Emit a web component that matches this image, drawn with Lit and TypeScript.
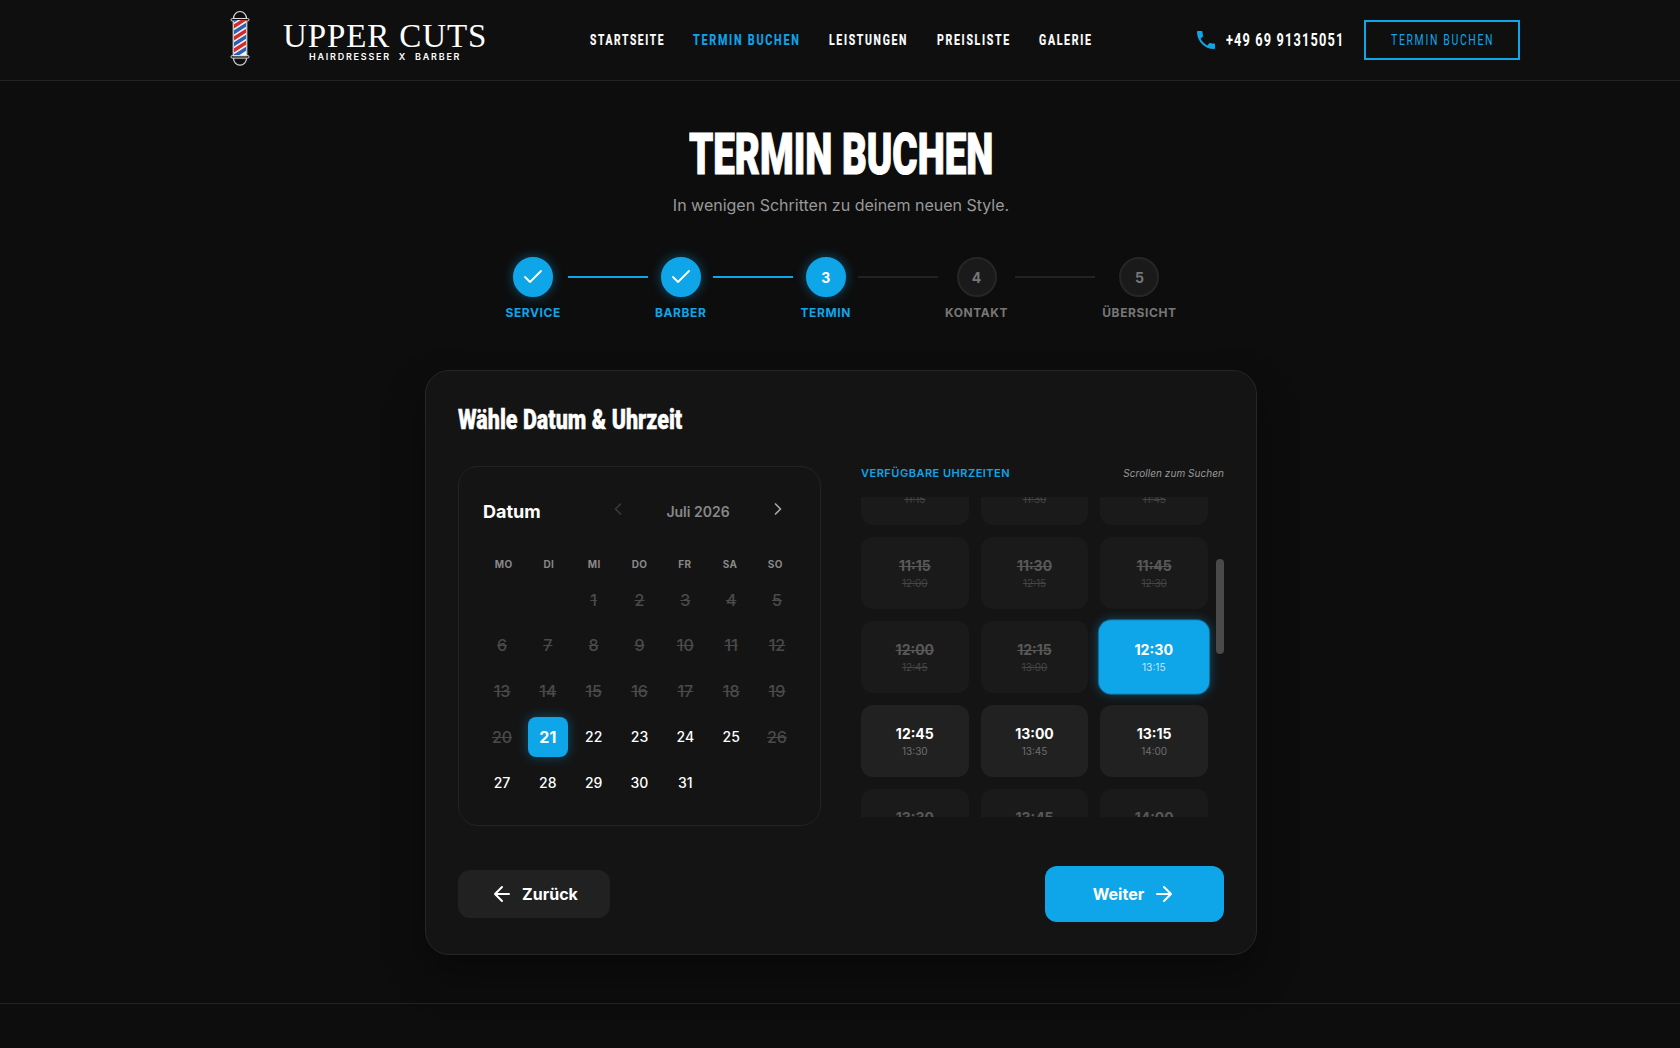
import { LitElement, html, css, svg } from "lit";
import { customElement } from "lit/decorators.js";

const pole = html`<svg class="pole" viewBox="0 0 20 56" width="20" height="56" aria-hidden="true">
  <defs><clipPath id="pc"><rect x="4" y="10" width="12" height="36"/></clipPath></defs>
  <path d="M3.5 8.5a6.5 7 0 0 1 13 0" fill="none" stroke="#ddd" stroke-width="1.2"/>
  <rect x="1" y="8.5" width="18" height="2.6" rx="1.3" fill="none" stroke="#ddd" stroke-width="1"/>
  <rect x="3" y="11" width="14" height="35" fill="#eee" stroke="#999" stroke-width="1"/>
  <g clip-path="url(#pc)">
    <rect x="4" y="10" width="12" height="36" fill="#f2f2f2"/>
    ${[-6, 6, 18, 30].map((y) => svg`<path d="M3 ${y + 9}L17 ${y}v4.2L3 ${y + 13.2}z" fill="#d42a2e"/>`)}
    ${[0, 12, 24, 36].map((y) => svg`<path d="M3 ${y + 9}L17 ${y}v4.2L3 ${y + 13.2}z" fill="#2b5fb0"/>`)}
  </g>
  <rect x="1" y="45.5" width="18" height="2.6" rx="1.3" fill="none" stroke="#ddd" stroke-width="1"/>
  <path d="M3.5 48.2a6.5 7 0 0 0 13 0" fill="none" stroke="#ddd" stroke-width="1.2"/>
</svg>`;

const ic = (d: string, size = 20, cls = "") =>
  html`<svg class=${cls} width=${size} height=${size} viewBox="0 0 24 24" fill="none" stroke="currentColor" stroke-width="2" stroke-linecap="round" stroke-linejoin="round" aria-hidden="true"><path d=${d}/></svg>`;

/* No condensed display face is installed: text is squeezed horizontally to its measured width. */
const fit = (text: string, w: number) =>
  html`<span class="fit" style="width:${w}px"><span class="fit-in" data-w=${w}>${text}</span></span>`;

const pad = (n: number) => String(n).padStart(2, "0");
const fmt = (m: number) => `${pad(Math.floor(m / 60))}:${pad(m % 60)}`;

const steps = [
  { label: "Service", state: "done", n: 1 },
  { label: "Barber", state: "done", n: 2 },
  { label: "Termin", state: "current", n: 3 },
  { label: "Kontakt", state: "todo", n: 4 },
  { label: "Übersicht", state: "todo", n: 5 },
];

const navItems: [string, number, boolean][] = [
  ["STARTSEITE", 75.4, false],
  ["TERMIN BUCHEN", 107.4, true],
  ["LEISTUNGEN", 79, false],
  ["PREISLISTE", 74, false],
  ["GALERIE", 53.5, false],
];

const slotTimes = Array.from({ length: 39 }, (_, i) => 9 * 60 + i * 15);

@customElement("app-root")
export class AppRoot extends LitElement {
  static styles = css`
    :host { display: block; min-height: 1048px; background: #0d0d0d; color: #fff; font-family: Inter, "Liberation Sans", sans-serif; }
    * { box-sizing: border-box; }
    .fit { display: inline-block; white-space: nowrap; vertical-align: top; }
    .fit-in { display: inline-block; transform-origin: left center; }
    .head { height: 81px; background: #0f0f0f; border-bottom: 1px solid #222; display: flex; align-items: center; padding: 0 160px 0 230px; }
    .logo { display: flex; align-items: center; gap: 33px; width: 359.5px; margin-top: -4px; }
    .pole { display: block; flex: none; }
    .brand { display: flex; flex-direction: column; align-items: center; margin-top: 6px; }
    .brand b { font: 400 33px/30px "Liberation Serif", serif; letter-spacing: .9px; white-space: nowrap; }
    .brand small { font: 600 9px/10px Inter, sans-serif; letter-spacing: 1.75px; white-space: pre; margin-top: 1px; }
    nav { display: flex; gap: 28.5px; }
    nav a { font: 700 15px/20px Roboto, sans-serif; letter-spacing: 2.4px; -webkit-text-stroke: .2px currentColor; }
    nav a.on { color: #0ea5e9; }
    .right { margin-left: auto; display: flex; align-items: center; }
    .phone { display: flex; align-items: center; gap: 8px; font: 700 18px/24px Roboto, sans-serif; letter-spacing: 1.6px; margin-right: 19px; }
    .phone svg { color: #0ea5e9; flex: none; }
    .cta { width: 156px; height: 40px; border: 2px solid #0ea5e9; color: #0ea5e9; display: flex; align-items: center; justify-content: center; font: 400 15px/20px Roboto, sans-serif; letter-spacing: 2.4px; }
    main { display: flex; flex-direction: column; align-items: center; padding: 41px 0 0 2px; }
    h1 { margin: 0; font: 900 58px/64px Roboto, sans-serif; height: 66px; -webkit-text-stroke: 1.2px #fff; }
    .sub { margin: 5px 0 0; font-size: 16px; line-height: 24px; color: #999; }
    .stepper { display: flex; gap: 7px; margin-top: 40px; height: 64px; }
    .step { display: flex; flex-direction: column; align-items: center; }
    .dot { width: 40px; height: 40px; border-radius: 50%; display: flex; align-items: center; justify-content: center; font-size: 14px; font-weight: 700; background: #1a1a1a; border: 2px solid #262626; color: #777; }
    .dot svg { stroke-width: 1.8; }
    .done .dot, .current .dot { background: #0ea5e9; border-color: #0ea5e9; color: #fff; box-shadow: 0 0 12px rgba(14, 165, 233, .45); }
    .lbl { margin-top: 8px; font-size: 12px; line-height: 16px; font-weight: 700; letter-spacing: .6px; text-transform: uppercase; color: #777; white-space: nowrap; }
    .done .lbl, .current .lbl { color: #0ea5e9; }
    .line { width: 80px; height: 2px; margin-top: 19px; background: #222; }
    .line.on { background: #0ea5e9; }
    .card { width: 832px; margin-top: 49px; padding: 32px; background: #141414; border: 1px solid #262626; border-radius: 24px; box-shadow: 0 20px 40px rgba(0, 0, 0, .35); }
    h2 { margin: 0; font: 900 27px/34px Roboto, sans-serif; height: 32px; -webkit-text-stroke: .4px #fff; }
    .cols { display: grid; grid-template-columns: 363px 363px; gap: 40px; margin-top: 31px; }
    .cal { height: 360px; padding: 23px; background: #141414; border: 1px solid #232323; border-radius: 20px; }
    .calhead { display: flex; align-items: center; justify-content: space-between; height: 36px; margin-top: 4px; padding-left: 1px; }
    .calhead strong { font-size: 18px; font-weight: 700; line-height: 28px; }
    .month { display: flex; align-items: center; width: 180px; justify-content: space-between; color: #888; font-size: 14px; font-weight: 600; margin: -2px 9px 0 0; }
    .month svg { margin-top: -5px; color: #aaa; }
    .month svg.off { color: #3a3a3a; }
    .wds { display: grid; grid-template-columns: repeat(7, 1fr); column-gap: 2px; margin-top: 22px; width: 315px; }
    .wd { height: 24px; font-size: 10px; line-height: 24px; font-weight: 700; color: #888; text-align: center; letter-spacing: .4px; }
    .days { display: grid; grid-template-columns: repeat(7, 40px); justify-content: space-between; row-gap: 5.6px; margin-top: 3.75px; width: 315px; }
    .day { height: 40px; display: flex; align-items: center; justify-content: center; font-size: 14px; font-weight: 500; }
    .day.off { color: #4a4a4a; font-size: 16px; text-decoration: line-through; }
    .day.sel span { width: 40px; height: 40px; border-radius: 8px; background: #0ea5e9; display: flex; align-items: center; justify-content: center; font-size: 16px; font-weight: 700; box-shadow: 0 0 12px rgba(14, 165, 233, .4); }
    .slothead { display: flex; justify-content: space-between; align-items: center; height: 16px; margin-top: -1px; }
    .slothead b { font-size: 11px; font-weight: 600; letter-spacing: .5px; color: #0ea5e9; }
    .slothead i { font-size: 10px; color: #999; letter-spacing: .05px; }
    .scrollwrap { position: relative; height: 320px; margin-top: 16px; }
    .scroller { height: 320px; overflow: hidden; padding-right: 16px; }
    .thumb { position: absolute; right: 0; top: 62px; width: 8px; height: 95px; border-radius: 4px; background: #4a4a4a; }
    .slots { display: grid; grid-template-columns: repeat(3, 1fr); gap: 12px; }
    .slot { height: 72px; border-radius: 12px; background: #212121; display: flex; flex-direction: column; align-items: center; justify-content: center; }
    .slot b { font-size: 14px; line-height: 20px; font-weight: 700; }
    .slot small { font-size: 10px; line-height: 14px; color: #6e6e6e; }
    .slot.off { background: #1a1a1a; }
    .slot.off b { color: #585858; text-decoration: line-through; }
    .slot.off small { color: #454545; text-decoration: line-through; }
    .slot.sel { background: #0ea5e9; transform: scale(1.02); box-shadow: 0 0 0 1px rgba(14, 165, 233, .5), 0 0 10px rgba(14, 165, 233, .4); }
    .slot.sel small { color: rgba(255, 255, 255, .75); }
    .actions { display: flex; justify-content: space-between; align-items: center; margin-top: 40px; }
    .btn { display: flex; align-items: center; justify-content: center; gap: 8px; font-size: 16px; font-weight: 700; border-radius: 12px; }
    .back { width: 152px; height: 48px; background: #212121; }
    .next { width: 179px; height: 56px; background: #0ea5e9; }
    footer { margin-top: 48px; border-top: 1px solid #222; height: 45px; }
  `;

  firstUpdated() {
    const s = this.renderRoot.querySelector(".scroller");
    if (s) s.scrollTop = 212;
    this.renderRoot.querySelectorAll<HTMLElement>(".fit-in").forEach((el) => {
      const k = Number(el.dataset.w) / el.offsetWidth;
      el.style.transform = `scaleX(${k})`;
    });
  }

  private day(d: number | null) {
    if (d === null) return html`<div class="day"></div>`;
    if (d === 21) return html`<div class="day sel"><span>21</span></div>`;
    const off = d < 21 || d === 26;
    return html`<div class="day ${off ? "off" : ""}">${d}</div>`;
  }

  private slot(m: number) {
    const t = fmt(m);
    const cls = t === "12:30" ? "sel" : t >= "12:45" && t <= "13:15" ? "" : "off";
    return html`<div class="slot ${cls}"><b>${t}</b><small>${fmt(m + 45)}</small></div>`;
  }

  render() {
    const days: (number | null)[] = [null, null, ...Array.from({ length: 31 }, (_, i) => i + 1)];
    return html`
      <header class="head">
        <div class="logo">${pole}
          <div class="brand"><b>UPPER CUTS</b><small>HAIRDRESSER  X  BARBER</small></div>
        </div>
        <nav>
          ${navItems.map(([t, w, on]) => html`<a class=${on ? "on" : ""}>${fit(t, w)}</a>`)}
        </nav>
        <div class="right">
          <div class="phone"><svg width="24" height="24" viewBox="0 0 24 24" fill="currentColor" aria-hidden="true"><path d="M6.62 10.79c1.44 2.83 3.76 5.14 6.59 6.59l2.2-2.2c.27-.27.67-.36 1.02-.24 1.12.37 2.33.57 3.57.57.55 0 1 .45 1 1V20c0 .55-.45 1-1 1-9.39 0-17-7.61-17-17 0-.55.45-1 1-1h3.5c.55 0 1 .45 1 1 0 1.25.2 2.45.57 3.57.11.35.03.74-.25 1.02l-2.2 2.2z"/></svg>${fit("+49 69 91315051", 118.6)}</div>
          <div class="cta">${fit("TERMIN BUCHEN", 103)}</div>
        </div>
      </header>
      <main>
        <h1>${fit("TERMIN BUCHEN", 304)}</h1>
        <p class="sub">In wenigen Schritten zu deinem neuen Style.</p>
        <div class="stepper">
          ${steps.map((s, i) => html`
            ${i ? html`<div class="line ${s.state !== "todo" ? "on" : ""}"></div>` : ""}
            <div class="step ${s.state}">
              <div class="dot">${s.state === "done" ? ic("M20 6 9 17l-5-5", 24) : s.n}</div>
              <div class="lbl">${s.label}</div>
            </div>`)}
        </div>
        <section class="card">
          <h2>${fit("Wähle Datum & Uhrzeit", 224)}</h2>
          <div class="cols">
            <div class="cal">
              <div class="calhead">
                <strong>Datum</strong>
                <div class="month">${ic("m15 18-6-6 6-6", 20, "off")}<span>Juli 2026</span>${ic("m9 18 6-6-6-6", 20)}</div>
              </div>
              <div class="wds">${["MO", "DI", "MI", "DO", "FR", "SA", "SO"].map((d) => html`<div class="wd">${d}</div>`)}</div>
              <div class="days">${days.map((d) => this.day(d))}</div>
            </div>
            <div>
              <div class="slothead"><b>VERFÜGBARE UHRZEITEN</b><i>Scrollen zum Suchen</i></div>
              <div class="scrollwrap">
                <div class="scroller"><div class="slots">${slotTimes.map((m) => this.slot(m))}</div></div>
                <div class="thumb"></div>
              </div>
            </div>
          </div>
          <div class="actions">
            <div class="btn back">${ic("m12 19-7-7 7-7M19 12H5", 24)}Zurück</div>
            <div class="btn next">Weiter${ic("M5 12h14M12 5l7 7-7 7", 24)}</div>
          </div>
        </section>
      </main>
      <footer></footer>
    `;
  }
}
